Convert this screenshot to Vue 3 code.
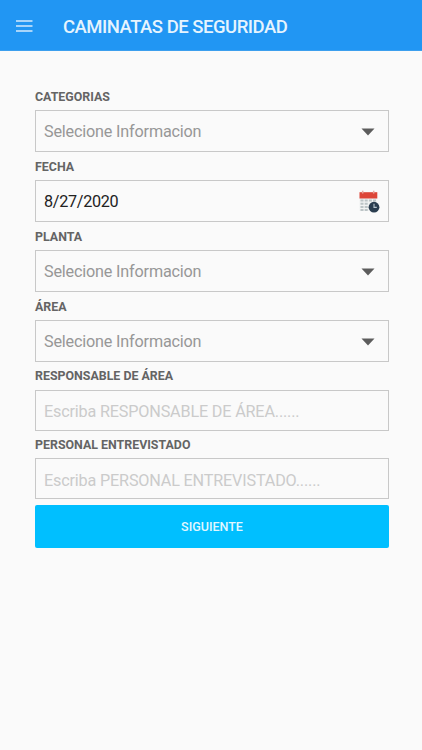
<template>
  <div class="screen">
    <header class="toolbar">
      <button class="menu-btn" aria-label="Menu">
        <svg width="17" height="12" viewBox="0 0 17 12">
          <path d="M0 1h16.5M0 6h16.5M0 11h16.5" stroke="#d3eafd" stroke-width="1.7" />
        </svg>
      </button>
      <h1 class="title">CAMINATAS DE SEGURIDAD</h1>
    </header>

    <form class="form" @submit.prevent>
      <div v-for="field in fields" :key="field.label" :class="['field', field.type]">
        <label class="label">{{ field.label }}</label>

        <!-- Dropdown -->
        <div v-if="field.type === 'select'" class="box">
          <span class="hint">Selecione Informacion</span>
          <svg class="arrow" width="14" height="8" viewBox="0 0 14 8">
            <path d="M0.5 0.5h13L7 7.5z" fill="#5c5c5c" />
          </svg>
        </div>

        <!-- Date -->
        <div v-else-if="field.type === 'date'" class="box">
          <span class="value">{{ field.value }}</span>
          <svg class="calendar" width="22" height="23" viewBox="0 0 22 23">
            <path d="M1.5 7h17v14h-17z" fill="#f1f3f3" />
            <path
              d="M2.5 10.5h3M6.7 10.5h3M10.9 10.5h3M15 10.5h3M2.5 13.7h3M6.7 13.7h3M2.5 16.9h3M6.7 16.9h3M2.5 20h3M6.7 20h3"
              stroke="#bcc4c6"
              stroke-width="2"
            />
            <path d="M1.5 2.2h17.8V8.5H1.5z" fill="#dd4538" />
            <path d="M4.7 0.8v2.8M15.7 0.8v2.8" stroke="#e8a59d" stroke-width="1.5" />
            <circle cx="16" cy="17.2" r="5.4" fill="#2b3e50" />
            <path d="M16 13.8v3.6h2.8" fill="none" stroke="#b9c5ce" stroke-width="1.1" />
          </svg>
        </div>

        <!-- Free text -->
        <input
          v-else
          v-model="field.value"
          class="box"
          type="text"
          :placeholder="`Escriba ${field.label}......`"
        />
      </div>

      <button class="submit" type="submit">SIGUIENTE</button>
    </form>
  </div>
</template>

<script setup>
import { ref } from 'vue'

const fields = ref([
  { label: 'CATEGORIAS', type: 'select', value: '' },
  { label: 'FECHA', type: 'date', value: '8/27/2020' },
  { label: 'PLANTA', type: 'select', value: '' },
  { label: 'ÁREA', type: 'select', value: '' },
  { label: 'RESPONSABLE DE ÁREA', type: 'text', value: '' },
  { label: 'PERSONAL ENTREVISTADO', type: 'text', value: '' }
])
</script>

<style>
body {
  margin: 0;
  background: #fafafa;
}
</style>

<style scoped>
.screen {
  min-height: 750px;
  box-sizing: border-box;
  background: #fafafa;
  font-family: Roboto, sans-serif;
}

.toolbar {
  height: 51px;
  display: flex;
  align-items: center;
  padding: 2px 0 0 16px;
  box-sizing: border-box;
  background: #2196f3;
  border-bottom: 1px solid #3c9fee;
}

.menu-btn {
  display: flex;
  padding: 0;
  border: none;
  background: none;
}

.title {
  margin: 2px 0 0 30px;
  font-size: 18.5px;
  font-weight: 500;
  line-height: 24px;
  letter-spacing: -0.5px;
  color: #e6f4fe;
  white-space: nowrap;
}

.form {
  display: flex;
  flex-direction: column;
  padding: 31px 33px 0 35px;
}

.label {
  display: block;
  height: 28px;
  font-size: 12.4px;
  font-weight: 700;
  line-height: 30px;
  color: #646464;
  white-space: nowrap;
}

.box {
  display: flex;
  align-items: center;
  justify-content: space-between;
  width: 100%;
  height: 42px;
  box-sizing: border-box;
  padding: 1px 13px 0 8px;
  border: 1px solid #c8c8c8;
  font-size: 16.2px;
  letter-spacing: -0.18px;
}

.hint {
  color: #979797;
}

.value {
  letter-spacing: -0.3px;
  color: #222;
}

.calendar {
  margin-right: -5px;
}

.text .label {
  height: 27.5px;
  line-height: 28px;
}

.text .box {
  display: block;
  height: 41px;
  padding-top: 3px;
  border-radius: 0;
  outline: none;
  background: transparent;
  font-family: inherit;
  letter-spacing: -0.17px;
  color: #222;
}

.text .box::placeholder {
  color: #cbcbcb;
  opacity: 1;
}

.submit {
  height: 43px;
  margin-top: 6px;
  padding: 0;
  border: none;
  border-radius: 2px;
  background: #00bfff;
  font-family: inherit;
  font-size: 12.5px;
  font-weight: 500;
  color: #e0f7ff;
}
</style>
